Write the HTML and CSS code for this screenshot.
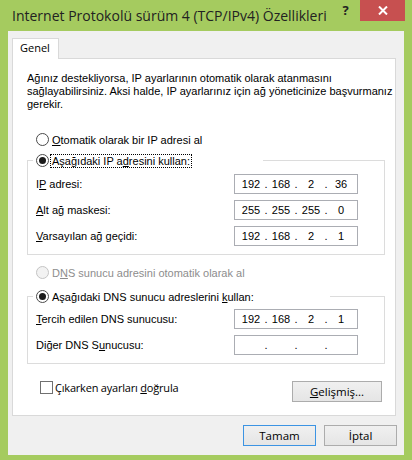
FILE: index.html
```html
<!DOCTYPE html>
<html lang="tr">
<head>
  <meta charset="UTF-8">
  <meta name="viewport" content="width=device-width, initial-scale=1.0">
  <title>Internet Protokolü sürüm 4 (TCP/IPv4) Özellikleri</title>
  <link rel="stylesheet" href="styles.css">
</head>
<body>
  <div class="window">
    <div class="titlebar">
      <span class="title">Internet Protokolü sürüm 4 (TCP/IPv4) Özellikleri</span>
      <span class="help">?</span>
      <span class="close">
        <svg width="10" height="9" viewBox="0 0 10 9"><path d="M1 0.5 L9 8.5 M9 0.5 L1 8.5" stroke="#fff" stroke-width="2"/></svg>
      </span>
    </div>

    <div class="client">
      <div class="tabs">
        <div class="tab">Genel</div>
      </div>

      <div class="panel">
        <p class="intro">Ağınız destekliyorsa, IP ayarlarının otomatik olarak atanmasını<br>sağlayabilirsiniz. Aksi halde, IP ayarlarınız için ağ yöneticinize başvurmanız<br>gerekir.</p>

        <div class="radio"><span class="dot"></span><span class="label"><u>O</u>tomatik olarak bir IP adresi al</span></div>

        <fieldset class="group">
          <legend class="ip-legend">
            <div class="legend-radio"><span class="dot on"></span><span class="label focus">Aşağıdaki IP a<u>d</u>resini kullan:</span></div>
          </legend>
          <div class="row">
            <span>I<u>P</u> adresi:</span>
            <div class="ip"><span>192</span><i>.</i><span>168</span><i>.</i><span>2</span><i>.</i><span>36</span></div>
          </div>
          <div class="row">
            <span><u>A</u>lt ağ maskesi:</span>
            <div class="ip"><span>255</span><i>.</i><span>255</span><i>.</i><span>255</span><i>.</i><span>0</span></div>
          </div>
          <div class="row">
            <span><u>V</u>arsayılan ağ geçidi:</span>
            <div class="ip"><span>192</span><i>.</i><span>168</span><i>.</i><span>2</span><i>.</i><span>1</span></div>
          </div>
        </fieldset>

        <div class="radio disabled"><span class="dot"></span><span class="label">D<u>N</u>S sunucu adresini otomatik olarak al</span></div>

        <fieldset class="group dns">
          <legend class="dns-legend">
            <div class="legend-radio"><span class="dot on"></span><span class="label">Aşağıdaki DNS sunucu adreslerini <u>k</u>ullan:</span></div>
          </legend>
          <div class="row">
            <span><u>T</u>ercih edilen DNS sunucusu:</span>
            <div class="ip"><span>192</span><i>.</i><span>168</span><i>.</i><span>2</span><i>.</i><span>1</span></div>
          </div>
          <div class="row">
            <span>Diğer DNS S<u>u</u>nucusu:</span>
            <div class="ip"><span></span><i>.</i><span></span><i>.</i><span></span><i>.</i><span></span></div>
          </div>
        </fieldset>

        <div class="bottom-row">
          <div class="check"><span class="box"></span><span class="label">Çıkarken ayarları <u>d</u>oğrula</span></div>
          <button class="btn advanced"><u>G</u>elişmiş...</button>
        </div>
      </div>

      <div class="dialog-btns">
        <button class="btn default">Tamam</button>
        <button class="btn">İptal</button>
      </div>
    </div>
  </div>
</body>
</html>
```

FILE: styles.css
```css
body {
  margin: 0;
  background-color: #a5cb5f;
  font-family: "Liberation Sans", Arial, sans-serif;
  font-size: 11px;
  color: #000;
}

.window {
  width: 412px;
  height: 460px;
  display: flex;
  flex-direction: column;
}

/* caption */
.titlebar {
  height: 31px;
  display: flex;
  align-items: flex-start;
  padding-left: 12px;
}

.title {
  font-family: "Open Sans", sans-serif;
  font-size: 14px;
  line-height: 20px;
  padding-top: 6px;
  white-space: nowrap;
  color: #222;
}

.help {
  margin-left: auto;
  width: 29px;
  text-align: center;
  font-family: "Open Sans", sans-serif;
  font-weight: bold;
  font-size: 13px;
  line-height: 20px;
  color: #222;
}

.close {
  width: 45px;
  height: 21px;
  margin-right: 7px;
  background-color: #c75050;
  display: flex;
  align-items: center;
  justify-content: center;
  flex-shrink: 0;
}

/* dialog body */
.client {
  flex: 1;
  margin: 0 8px 5px;
  background-color: #f0f0f0;
  padding: 7px 7px 0 4px;
}

.tabs {
  display: flex;
}

.tab {
  width: 47px;
  height: 21px;
  box-sizing: border-box;
  border: 1px solid #d9d9d9;
  border-bottom: none;
  background-color: #fff;
  margin-bottom: -1px;
  position: relative;
  z-index: 1;
  padding-left: 7px;
  font-family: "Open Sans", sans-serif;
  font-size: 11px;
  line-height: 18px;
}

.panel {
  width: 384px;
  height: 358px;
  box-sizing: border-box;
  border: 1px solid #d9d9d9;
  background-color: #fff;
}

.intro {
  margin: 0;
  padding: 13px 0 0 14px;
  line-height: 13px;
}

/* radio buttons */
.radio,
.legend-radio {
  display: flex;
  align-items: center;
  height: 17px;
  gap: 3px;
}

.radio {
  margin-top: 20px;
  padding-left: 23px;
}

.dot {
  width: 13px;
  height: 13px;
  box-sizing: border-box;
  border: 1px solid #4a4a4a;
  border-radius: 50%;
  background-color: #fff;
  display: flex;
  align-items: center;
  justify-content: center;
  flex-shrink: 0;
}

.dot.on::after {
  content: "";
  width: 7px;
  height: 7px;
  border-radius: 50%;
  background-color: #1b1b1b;
}

.radio.disabled {
  margin-top: 9px;
  color: #8d8d8d;
}

.radio.disabled .dot {
  border-color: #c4c4c4;
  background-color: #f2f2f2;
}

.focus {
  outline: 1px dotted #000;
  padding: 0 1px;
  margin-left: -1px;
}

/* group boxes */
.group {
  margin: 4px 0 0 14px;
  width: 358px;
  box-sizing: border-box;
  border: 1px solid #dcdcdc;
  padding: 5px 26px 8px 8px;
}

.group.dns {
  margin-top: 7px;
  padding-top: 4px;
}

.group legend {
  padding: 0 0 0 3px;
  margin-left: -3px;
  box-sizing: border-box;
}

.ip-legend {
  width: 230px;
}

.dns-legend {
  width: 297px;
}

.row {
  display: flex;
  justify-content: space-between;
  align-items: center;
  height: 20px;
}

.row + .row {
  margin-top: 6px;
}

.ip {
  width: 124px;
  height: 20px;
  box-sizing: border-box;
  border: 1px solid #abadb3;
  padding: 0 3px;
  display: flex;
  align-items: center;
}

.ip span {
  width: 26px;
  text-align: center;
}

.ip i {
  width: 4px;
  text-align: center;
  font-style: normal;
}

/* checkbox and buttons */
.bottom-row {
  display: flex;
  justify-content: space-between;
  align-items: flex-start;
  margin-top: 17px;
  padding: 0 13px 0 27px;
}

.check {
  display: flex;
  align-items: center;
  height: 13px;
  gap: 2px;
  font-family: "Open Sans", sans-serif;
  font-size: 11px;
  letter-spacing: -0.2px;
}

.box {
  width: 13px;
  height: 13px;
  box-sizing: border-box;
  border: 1px solid #707070;
  background-color: #fff;
}

.btn {
  height: 21px;
  padding: 0;
  border: 1px solid #acacac;
  background: linear-gradient(#f0f0f0, #e5e5e5);
  font-family: "Open Sans", sans-serif;
  font-size: 11.5px;
  color: #000;
}

.advanced {
  width: 90px;
}

.dialog-btns {
  display: flex;
  justify-content: flex-end;
  gap: 8px;
  margin-top: 9px;
}

.dialog-btns .btn {
  width: 73px;
}

.btn.default {
  border-color: #3c94e3;
}
```
